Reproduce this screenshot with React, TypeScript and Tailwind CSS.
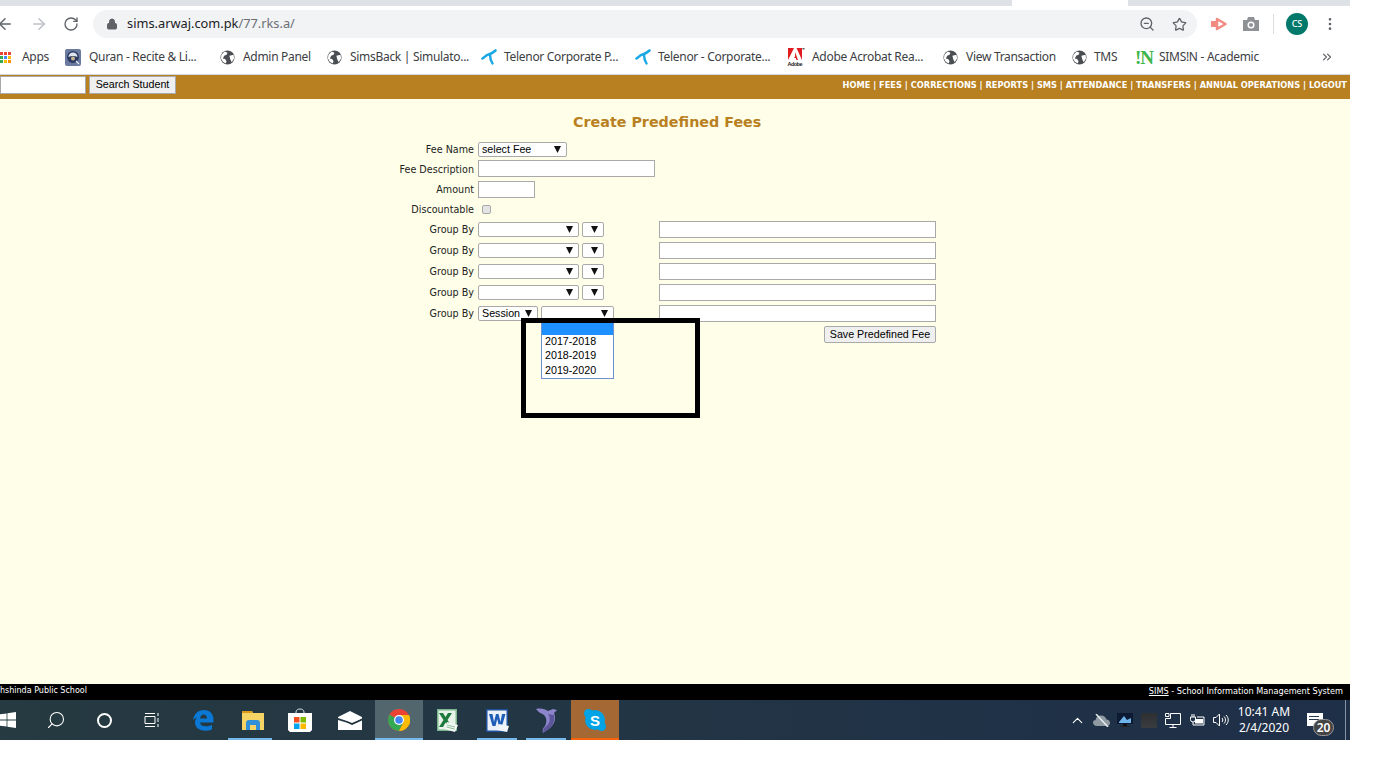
import { ArrowLeft, ArrowRight, ChevronUp, ChevronsRight, EllipsisVertical, Lock, RotateCw, Search, Star, ZoomOut } from "lucide-react";

const GlobeIcon = () => (
  <svg width="15" height="15" viewBox="0 0 16 16" className="shrink-0">
    <circle cx="8" cy="8" r="7.5" fill="#4a4d51" />
    <path d="M5 1.5 8 3 7 5 4.5 6 3 9 5.5 9.5 7 12 6 14.5 3 12.5 1 9 1.5 5ZM10 6 14.5 5 15 9 12.5 13 11 10Z" fill="#fff" />
  </svg>
);

const TelenorIcon = () => (
  <svg width="16" height="16" viewBox="0 0 16 16" fill="none" stroke="#1aa8e4" strokeLinecap="round" className="shrink-0">
    <path d="M1.500 9.500C4 8 5 6 7.500 5.500 10 5 12 3.500 14.500 1.500" strokeWidth="2.600" />
    <path d="M9 6C9 9 10 12 11.500 14.500" strokeWidth="2.400" />
  </svg>
);

const AppsIcon = () => {
  const colors = ["#ea4335", "#ea4335", "#ea4335", "#34a853", "#4285f4", "#fbbc05", "#34a853", "#fbbc05", "#fb8c00"];
  return (
    <div className="grid grid-cols-3 gap-[1px] w-[11px] shrink-0">
      {colors.map((c, idx) => (
        <svg key={idx} width="3" height="3">
          <rect width="3" height="3" fill={c} />
        </svg>
      ))}
    </div>
  );
};

const QuranIcon = () => (
  <svg width="16" height="17" viewBox="0 0 16 17" className="shrink-0">
    <rect width="16" height="17" rx="2" fill="#6b7ba0" />
    <circle cx="8" cy="8" r="6" fill="#2c3a63" />
    <path d="M3.500 8A4.500 4.500 0 0 1 12.500 8C10 6.500 6 6.500 3.500 8Z" fill="#dfe6f0" />
    <circle cx="8" cy="9.500" r="2" fill="#c9b98a" />
    <path d="M11 12 14 15" stroke="#e6ebf2" strokeWidth="1.200" />
  </svg>
);

const AdobeIcon = () => (
  <svg width="18" height="18" viewBox="0 0 18 18" className="shrink-0">
    <path d="M1 0H7L1 12ZM9.500 0H15V12Z" fill="#e01b22" />
    <path d="M8 4 11 12H9.500L8.800 10H7L8 8.500Z" fill="#e01b22" />
    <rect x="15.500" y="0" width="2" height="1.500" fill="#555" />
    <text x="0.500" y="17.500" fontSize="5.500" fontWeight="700" fontFamily="Liberation Sans, sans-serif" fill="#222" textLength="15">Adobe</text>
  </svg>
);

const SimsinIcon = () => (
  <span className="w-[16px] shrink-0 font-['Liberation_Serif',serif] font-bold text-[19px] leading-none text-[#3cb54a] tracking-[-1px]">!N</span>
);

const bookmarks = [
  { icon: <AppsIcon />, label: "Apps", gap: "ml-[11px]", width: "w-[27px]", next: "ml-[16px]" },
  { icon: <QuranIcon />, label: "Quran - Recite & Li...", gap: "ml-[8px]", width: "w-[110px]", next: "ml-[21px]" },
  { icon: <GlobeIcon />, label: "Admin Panel", gap: "ml-[8px]", width: "w-[67px]", next: "ml-[17px]" },
  { icon: <GlobeIcon />, label: "SimsBack | Simulato...", gap: "ml-[8px]", width: "w-[115px]", next: "ml-[16px]" },
  { icon: <TelenorIcon />, label: "Telenor Corporate P...", gap: "ml-[7px]", width: "w-[115px]", next: "ml-[16px]" },
  { icon: <TelenorIcon />, label: "Telenor - Corporate...", gap: "ml-[7px]", width: "w-[113px]", next: "ml-[16px]" },
  { icon: <AdobeIcon />, label: "Adobe Acrobat Rea...", gap: "ml-[7px]", width: "w-[113px]", next: "ml-[18px]" },
  { icon: <GlobeIcon />, label: "View Transaction", gap: "ml-[8px]", width: "w-[89px]", next: "ml-[17px]" },
  { icon: <GlobeIcon />, label: "TMS", gap: "ml-[7px]", width: "w-[25px]", next: "ml-[16px]" },
  { icon: <SimsinIcon />, label: "SIMS!N - Academic", gap: "ml-[8px]", width: "w-[103px]", next: "" },
];

const navLinks = ["HOME", "FEES", "CORRECTIONS", "REPORTS", "SMS", "ATTENDANCE", "TRANSFERS", "ANNUAL OPERATIONS", "LOGOUT"];

const SelectBox = ({ text, className }: { text?: string; className: string }) => (
  <div className={`h-[15px] flex items-center justify-between pl-[3px] pr-[5px] bg-white border border-[#a9a9a9] rounded-[2px] font-['Liberation_Sans',sans-serif] text-[10.700px] text-black ${className}`}>
    <span className="leading-none">{text}</span>
    <svg width="7" height="7" viewBox="0 0 7 7" className="shrink-0">
      <path d="M0 0H7L3.500 7Z" fill="#111" />
    </svg>
  </div>
);

const TextBox = ({ className }: { className: string }) => (
  <input type="text" className={`h-[17px] bg-white border border-[#a9a9a9] outline-none ${className}`} />
);

const Label = ({ children }: { children: string }) => (
  <span className="w-[94px] shrink-0 pt-[2px] text-right text-[9.600px] text-[#222]">{children}</span>
);

const GroupRow = () => (
  <div className="h-[21px] flex items-center gap-[4px]">
    <Label>Group By</Label>
    <SelectBox className="w-[101px]" />
    <SelectBox className="w-[22px] -ml-[1px]" />
    <TextBox className="w-[277px] ml-[51px]" />
  </div>
);

const TaskSlot = ({ children, className = "" }: { children: React.ReactNode; className?: string }) => (
  <div className={`h-full flex items-center justify-center shrink-0 relative ${className}`}>{children}</div>
);

const App = () => {
  return (
    <div className="w-[1388px] h-[770px] bg-white overflow-hidden">
      <div className="w-[1350px] h-[740px] flex flex-col font-['DejaVu_Sans',sans-serif]">
        {/* tab strip */}
        <div className="h-[6px] flex bg-[#dee1e6] shrink-0">
          <div className="w-[1012px]" />
          <div className="w-[116px] bg-white" />
        </div>

        {/* toolbar */}
        <div className="h-[34px] pt-[2px] flex items-center bg-white shrink-0 font-['Noto_Sans',sans-serif]">
          <ArrowLeft size={18} className="text-[#5f6368] -ml-[4px] shrink-0" />
          <ArrowRight size={18} className="text-[#bdc1c6] ml-[16px] shrink-0" />
          <RotateCw size={16} className="text-[#5f6368] ml-[15px] shrink-0" />
          <div className="ml-[14px] w-[1104px] h-[28px] bg-[#f1f3f4] rounded-full flex items-center pl-[13px] pr-[10px]">
            <Lock size={12} className="text-[#5f6368] fill-[#5f6368] shrink-0" />
            <span className="ml-[9px] text-[12.800px] text-[#202124]">
              sims.arwaj.com.pk<span className="text-[#6b6f74]">/77.rks.a/</span>
            </span>
            <ZoomOut size={16} className="ml-auto text-[#5f6368] -translate-x-[1px]" />
            <Star size={15} className="ml-[16px] text-[#5f6368]" />
          </div>
          <svg width="17" height="14" viewBox="0 0 17 14" className="ml-[14px] shrink-0" fill="none">
            <path d="M0 4H6V10H0Z" fill="#f28b82" />
            <path d="M6 2 14.500 7 6 12Z" stroke="#f28b82" strokeWidth="2.500" strokeLinejoin="round" />
          </svg>
          <svg width="16" height="14" viewBox="0 0 16 14" className="ml-[15px] shrink-0">
            <path d="M0 3H4L5 0H11L12 3H16V14H0Z" fill="#8f9295" />
            <circle cx="8" cy="8" r="3.500" fill="#fff" />
            <circle cx="8" cy="8" r="2" fill="#8f9295" />
          </svg>
          <div className="ml-[14px] w-px h-[20px] bg-[#dadce0] shrink-0" />
          <div className="ml-[12px] w-[22px] h-[22px] rounded-full bg-[#00796b] text-white text-[9px] font-medium flex items-center justify-center shrink-0">CS</div>
          <EllipsisVertical size={16} className="ml-[14px] text-[#5f6368] shrink-0" />
        </div>

        {/* bookmarks bar */}
        <div className="h-[35px] flex items-center bg-white border-b border-[#d5d7da] shrink-0 font-['Noto_Sans',sans-serif] text-[12px] text-[#3c4043] whitespace-nowrap">
          {bookmarks.map((b, idx) => (
            <div key={idx} className={`flex items-center ${idx === 0 ? "" : bookmarks[idx - 1].next}`}>
              {b.icon}
              <span className={`${b.gap} ${b.width} tracking-[-0.3px]`}>{b.label}</span>
            </div>
          ))}
          <ChevronsRight size={14} className="ml-[58px] text-[#5f6368]" />
        </div>

        {/* site header */}
        <div className="h-[24px] bg-[#b88021] flex items-center shrink-0">
          <input type="text" className="w-[86px] h-[18px] -mt-[5px] bg-white border border-[#a9a9a9] outline-none" />
          <button className="ml-[3px] -mt-[5px] w-[87px] h-[18px] bg-[#efefef] border border-[#a9a9a9] font-['Liberation_Sans',sans-serif] text-[10.700px] leading-none text-black">
            Search Student
          </button>
          <div className="ml-auto mr-[3px] -mt-[3px] text-[8.250px] font-bold text-white whitespace-nowrap">
            {navLinks.map((link, idx) => (
              <span key={link}>
                {idx > 0 ? " | " : ""}
                {link}
              </span>
            ))}
          </div>
        </div>

        {/* page body */}
        <div className="relative flex-1 bg-[#ffffe9] pl-[380px] pt-[13px]">
          <h1 className="pl-[193px] text-[14.300px] leading-[20px] font-bold text-[#b88021] whitespace-nowrap">
            Create Predefined Fees
          </h1>
          <div className="mt-[7px] flex flex-col">
            <div className="h-[20px] flex items-center gap-[4px]">
              <Label>Fee Name</Label>
              <SelectBox text="select Fee" className="w-[89px]" />
            </div>
            <div className="h-[20px] flex items-center gap-[4px]">
              <Label>Fee Description</Label>
              <TextBox className="w-[177px] -mt-[1px]" />
            </div>
            <div className="h-[21px] flex items-center gap-[4px]">
              <Label>Amount</Label>
              <TextBox className="w-[57px]" />
            </div>
            <div className="h-[19px] flex items-center gap-[4px]">
              <Label>Discountable</Label>
              <input type="checkbox" className="appearance-none ml-[4px] w-[9px] h-[9px] -mt-[1px] bg-[#e4e4e4] border border-[#a9a9a9] rounded-[2px]" />
            </div>
            <GroupRow />
            <GroupRow />
            <GroupRow />
            <GroupRow />
            <div className="h-[21px] flex items-center gap-[4px]">
              <Label>Group By</Label>
              <SelectBox text="Session" className="w-[60px]" />
              <SelectBox className="w-[73px] -ml-[1px] border-[#6f8fd0]" />
              <TextBox className="w-[277px] ml-[41px]" />
            </div>
            <div className="w-[556px] flex justify-end mt-[2px]">
              <button className="w-[112px] h-[17px] bg-[#efefef] border border-[#a9a9a9] rounded-[2px] font-['Liberation_Sans',sans-serif] text-[10.700px] leading-none text-black">
                Save Predefined Fee
              </button>
            </div>
          </div>

          {/* open dropdown list */}
          <div className="absolute left-[541px] top-[222px] w-[73px] h-[58px] bg-white border border-[#6f8fd0] font-['Liberation_Sans',sans-serif] text-[10.700px] leading-[14.300px] text-black">
            <div className="h-[13px] bg-[#1e90ff]" />
            <div className="pl-[3px] -mt-[1px]">
              <div>2017-2018</div>
              <div>2018-2019</div>
              <div>2019-2020</div>
            </div>
          </div>
          {/* black annotation frame */}
          <div className="absolute left-[521px] top-[219px] w-[179px] h-[100px] border-[5px] border-black" />
        </div>

        {/* site footer */}
        <div className="h-[16px] pb-[2px] bg-black flex items-center justify-between shrink-0 text-[8px] text-white whitespace-nowrap">
          <span>hshinda Public School</span>
          <span className="mr-[7px] text-[8.160px]">
            <span className="underline">SIMS</span> - School Information Management System
          </span>
        </div>

        {/* windows taskbar */}
        <div className="h-[40px] flex items-center shrink-0 bg-gradient-to-r from-[#263a41] to-[#1e2f48] text-white">
          <TaskSlot className="w-[32px]">
            <svg width="16" height="16" viewBox="0 0 16 16" className="-ml-[16px]">
              <path d="M0 2.300 6.600 1.400V7.500H0ZM7.400 1.300 16 0V7.500H7.400ZM0 8.500H6.600V14.600L0 13.700ZM7.400 8.500H16V16L7.400 14.700Z" fill="#fff" />
            </svg>
          </TaskSlot>
          <TaskSlot className="w-[48px]">
            <Search size={20} className="-scale-x-100" strokeWidth={1.300} />
          </TaskSlot>
          <TaskSlot className="w-[48px]">
            <div className="w-[15px] h-[15px] rounded-full border-2 border-white" />
          </TaskSlot>
          <TaskSlot className="w-[48px]">
            <svg width="16" height="16" viewBox="0 0 16 16" fill="none" stroke="#fff" strokeWidth="1">
              <path d="M1 1.500H11M1 14.500H11M1 4.500H11V11.500H1ZM14 1V4M14 6V10M14 12V15" />
            </svg>
          </TaskSlot>
          <TaskSlot className="w-[54px]">
            <svg width="21" height="21" viewBox="0 0 21 21">
              <path d="M0 10C1 4 5 0 11 0 17 0 20.500 4 20.500 10V12.500H7C7.500 16.500 13 17.500 19 15V19.500C11 22.500 2.500 20 2 13 2 11 2.500 9 4 7.500 2.500 8 1 9 0 10ZM7 8.500H14C14 6 12.500 4.500 10.500 4.500 9 4.500 7.500 6 7 8.500Z" fill="#0a78d4" />
            </svg>
          </TaskSlot>
          <TaskSlot className="w-[46px]">
            <svg width="22" height="19" viewBox="0 0 22 19">
              <path d="M0 0H10L11 2H22V19H0Z" fill="#f5d365" />
              <path d="M0 0H10L11 2H0Z" fill="#d99a1c" />
              <path d="M4 19V12C4 10 5 9 7 9H15C17 9 18 10 18 12V19H14V14H8V19Z" fill="#2f8fd8" />
            </svg>
            <div className="absolute bottom-0 left-[-2px] w-[44px] h-[2px] bg-[#76b9ed]" />
          </TaskSlot>
          <TaskSlot className="w-[48px]">
            <svg width="24" height="24" viewBox="0 0 24 24">
              <path d="M8 7V4C8 0 16 0 16 4V7" fill="none" stroke="#dfe3e6" strokeWidth="1" />
              <path d="M0 5H24V22L22 24H2L0 22Z" fill="#fff" />
              <rect x="6" y="9" width="5.500" height="5.500" fill="#f25022" />
              <rect x="12.500" y="9" width="5.500" height="5.500" fill="#7fba00" />
              <rect x="6" y="15.500" width="5.500" height="5.500" fill="#00a4ef" />
              <rect x="12.500" y="15.500" width="5.500" height="5.500" fill="#ffb900" />
            </svg>
          </TaskSlot>
          <TaskSlot className="w-[51px]">
            <svg width="24" height="19" viewBox="0 0 24 19">
              <path d="M0 6 12 0 24 6V8L14 12 9 10 0 7ZM0 9 10 12 14 14 24 9.500V19H0Z" fill="#fff" />
              <path d="M9 11 14 13 24 8" fill="none" stroke="#1f3039" strokeWidth="1" />
            </svg>
          </TaskSlot>
          <TaskSlot className="w-[48px] bg-[#52666e]">
            <svg width="22" height="22" viewBox="0 0 22 22">
              <circle cx="11" cy="11" r="11" fill="#ea4335" />
              <path d="M11 11 1.500 5.500A11 11 0 0 0 11 22L16 12Z" fill="#34a853" />
              <path d="M11 6H21A11 11 0 0 1 11 22L16 12Z" fill="#fbbc05" />
              <circle cx="11" cy="11" r="5" fill="#fff" />
              <circle cx="11" cy="11" r="3.800" fill="#4285f4" />
            </svg>
            <div className="absolute bottom-0 inset-x-0 h-[2px] bg-[#76b9ed]" />
          </TaskSlot>
          <TaskSlot className="w-[48px]">
            <svg width="22" height="23" viewBox="0 0 22 23">
              <path d="M1 0H21V22H1Z" fill="#7bb78a" />
              <path d="M2.500 1.500H19.500V20.500H2.500Z" fill="#e8f3ea" />
              <path d="M3 4H7L9.500 8 12 4H16L11.500 11 16 18H12L9.500 13.500 7 18H3L7.500 11Z" fill="#1d7a3c" />
              <path d="M11 13 22 16 19 23 8 20Z" fill="#f4f8f4" />
              <path d="M11 16 19 18M10.500 18 18.500 20" stroke="#8cbf98" strokeWidth="1" />
            </svg>
          </TaskSlot>
          <TaskSlot className="w-[52px]">
            <svg width="23" height="23" viewBox="0 0 23 23">
              <rect width="22" height="23" fill="#1f4f99" />
              <rect x="1.500" y="1.500" width="19" height="20" fill="#eaf1fb" />
              <path d="M3 5H6.500L8 13 10 5H12.500L14.500 13 16 5H19.500L16 17H13L11.200 10 9.500 17H6.500Z" fill="#1e5cb8" />
              <path d="M13 15 23 17 21 23 11 21Z" fill="#f2f4f7" />
            </svg>
            <div className="absolute bottom-0 left-[6px] w-[40px] h-[2px] bg-[#76b9ed]" />
          </TaskSlot>
          <TaskSlot className="w-[48px]">
            <svg width="22" height="25" viewBox="0 0 22 25">
              <path d="M0 1C5 0 9 1 12 3L17 1 21 2 18 5C20 10 19 15 15 19 12 22 9 23 7 25 6 22 7 20 9 18 11 14 11 10 8 7 5 5 3 5 0 1Z" fill="#8d86cc" />
              <path d="M12 6C15 10 14 16 9 19 8 20 7 22 7 25 9 23 12 22 15 19 18 15 19 11 18 7Z" fill="#5d569b" />
            </svg>
            <div className="absolute bottom-0 left-[3px] w-[40px] h-[2px] bg-[#76b9ed]" />
          </TaskSlot>
          <TaskSlot className="w-[48px] bg-[#a36833]">
            <div className="relative w-[22px] h-[22px]">
              <div className="absolute left-0 top-0 w-[9px] h-[9px] rounded-full bg-[#00a4e6]" />
              <div className="absolute right-0 bottom-0 w-[9px] h-[9px] rounded-full bg-[#00a4e6]" />
              <div className="absolute inset-[1px] rounded-full bg-[#00a4e6] flex items-center justify-center font-['Liberation_Sans',sans-serif] font-bold text-[15px] leading-none text-white">S</div>
            </div>
            <div className="absolute bottom-0 inset-x-0 h-[2px] bg-[#f7630c]" />
          </TaskSlot>

          {/* system tray */}
          <div className="ml-auto h-full flex items-center">
            <TaskSlot className="w-[24px]">
              <ChevronUp size={17} strokeWidth={1.500} />
            </TaskSlot>
            <TaskSlot className="w-[24px]">
              <svg width="17" height="13" viewBox="0 0 17 13">
                <path d="M4 12C1 12 0 10 0 8.500 0 7 1 6 2.500 6 3 3 5 1.500 8 1.500 11 1.500 13 3.500 13.500 5.500 15.500 5.500 17 7 17 9 17 11 15.500 12 14 12Z" fill="#8f9aa3" />
                <path d="M3 0 15 13" stroke="#e8edf0" strokeWidth="1.500" />
              </svg>
            </TaskSlot>
            <TaskSlot className="w-[24px]">
              <svg width="16" height="15" viewBox="0 0 16 15">
                <rect width="16" height="11" fill="#0d1a33" />
                <path d="M2 9 7 3 10 7 14 5V10H2Z" fill="#6eb4ea" />
                <rect x="6" y="11" width="4" height="2" fill="#111" />
                <rect x="3" y="13" width="10" height="1" fill="#222" />
              </svg>
            </TaskSlot>
            <TaskSlot className="w-[24px]">
              <div className="w-[16px] h-[15px] bg-gradient-to-b from-[#2d2f31] to-[#3a3d40]" />
            </TaskSlot>
            <TaskSlot className="w-[24px]">
              <svg width="16" height="15" viewBox="0 0 16 15" fill="none" stroke="#fff" strokeWidth="1">
                <path d="M5.500 5.500V.5H15.500V11.500H.5V5.500H5.500ZM8 11.500V14M4.500 14.500H11.500M.5 .5H4V3.500H.5Z" />
              </svg>
            </TaskSlot>
            <TaskSlot className="w-[24px]">
              <svg width="16" height="12" viewBox="0 0 16 12" fill="none" stroke="#fff" strokeWidth="1">
                <path d="M3 0V3M5 0V3M1.500 3H6.500V5.500A2.500 2.500 0 0 1 1.500 5.500ZM4 8V11H15V3H8" />
                <rect x="6" y="5" width="8" height="4.500" fill="#fff" stroke="none" />
              </svg>
            </TaskSlot>
            <TaskSlot className="w-[24px]">
              <svg width="16" height="14" viewBox="0 0 16 14" fill="none" stroke="#fff" strokeWidth="1">
                <path d="M.5 4.500H3L6.500 1V13L3 9.500H.5ZM9 5C10 6 10 8 9 9M11 3.500C13 5.500 13 8.500 11 10.500M13 2C16 5 16 9 13 12" />
              </svg>
            </TaskSlot>
            <div className="w-[62px] text-center font-['Noto_Sans',sans-serif] text-[12px] leading-[16px] whitespace-nowrap">
              <div>10:41 AM</div>
              <div>2/4/2020</div>
            </div>
            <div className="w-[50px] h-full relative">
              <div className="absolute left-[12px] top-[13px] w-[16px] h-[13px] bg-white flex flex-col gap-[2px] pt-[3px] pl-[2px]">
                <div className="w-[10px] h-px bg-[#263a50]" />
                <div className="w-[10px] h-px bg-[#263a50]" />
              </div>
              <div className="absolute left-[18px] top-[19px] w-[21px] h-[17px] rounded-full bg-[#444] border border-[#999] flex items-center justify-center font-['Noto_Sans',sans-serif] text-[12px] font-semibold leading-none">
                20
              </div>
            </div>
            <div className="w-[1px] h-full bg-[#8593a3]" />
            <div className="w-[4px]" />
          </div>
        </div>
      </div>
    </div>
  );
};

export default App;
